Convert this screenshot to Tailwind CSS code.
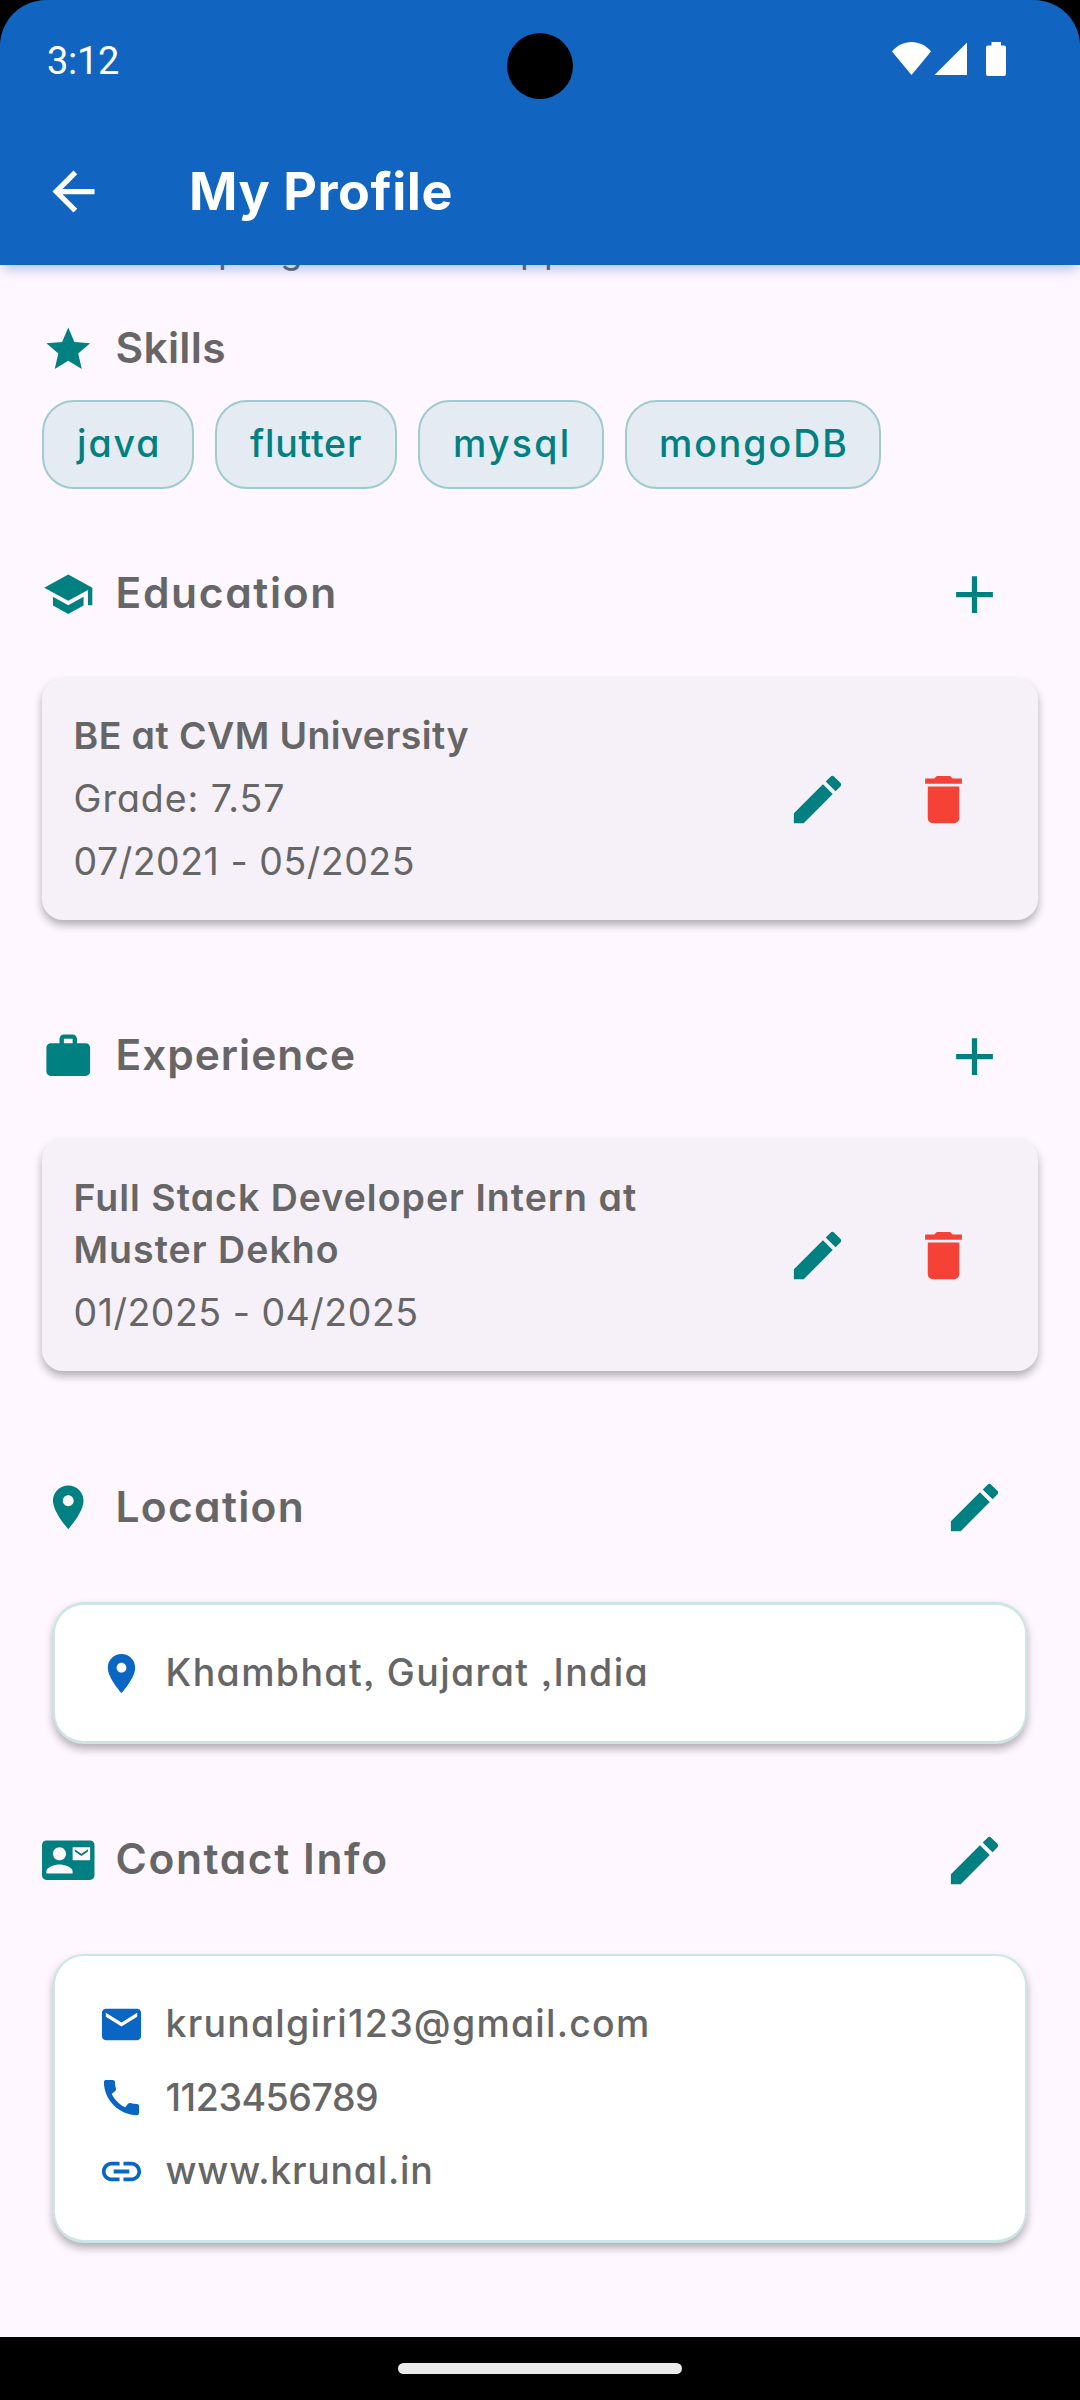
<!DOCTYPE html>
<html lang="en">
<head>
<meta charset="utf-8">
<title>My Profile</title>
<script src="https://cdn.jsdelivr.net/npm/@tailwindcss/browser@4"></script>
</head>
<body class="bg-black">
<!-- shared icon shapes -->
<svg class="hidden">
  <symbol id="edit" viewBox="0 0 24 24"><path d="M3 17.25V21h3.75L17.81 9.94l-3.75-3.75L3 17.25zM20.71 7.04c.39-.39.39-1.02 0-1.41l-2.34-2.34c-.39-.39-1.02-.39-1.41 0l-1.83 1.83 3.75 3.75 1.83-1.83z"/></symbol>
  <symbol id="delete" viewBox="0 0 24 24"><path d="M6 19c0 1.1.9 2 2 2h8c1.1 0 2-.9 2-2V7H6v12zM19 4h-3.5l-1-1h-5l-1 1H5v2h14V4z"/></symbol>
  <symbol id="add" viewBox="0 0 24 24"><path d="M19 13h-6v6h-2v-6H5v-2h6V5h2v6h6v2z"/></symbol>
  <symbol id="pin" viewBox="0 0 24 24"><path d="M12 2C8.13 2 5 5.13 5 9c0 5.25 7 13 7 13s7-7.75 7-13c0-3.87-3.13-7-7-7zm0 9.5c-1.38 0-2.5-1.12-2.5-2.5s1.12-2.5 2.5-2.5 2.5 1.12 2.5 2.5-1.12 2.5-2.5 2.5z"/></symbol>
</svg>
<div class="relative w-[1080px] h-[2400px] overflow-hidden flex flex-col font-[Inter,sans-serif] [font-feature-settings:'cv11','ss03'] text-[#666666] bg-[#fef7ff]">

  <header class="relative z-10 h-[265px] shrink-0 bg-[#1165c1] text-white rounded-t-[46px] shadow-[0_8px_12px_-3px_rgba(17,80,170,0.28)] flex flex-col">
    <div class="h-[118px] flex items-center pl-[47px] pr-[74px] font-[Roboto,sans-serif]">
      <span class="text-[38px] leading-none mt-[4px] tracking-[-0.3px]">3:12</span>
      <svg class="ml-auto w-[114px] h-[34px]" viewBox="892 42 114 34" fill="currentColor">
        <path d="M911.5 75L892 51.5C897 45.500 904 42 911.500 42S926 45.500 931 51.500z"/>
        <path d="M934.500 75L967 42.500V75z"/>
        <path d="M991.500 42h9.500v3.500h3a2 2 0 0 1 2 2V74a2 2 0 0 1-2 2h-16a2 2 0 0 1-2-2V47.500a2 2 0 0 1 2-2h3.500z"/>
      </svg>
    </div>
    <div class="h-[147px] flex items-center pl-[42px]">
      <svg class="w-[63px] h-[63px]" viewBox="0 0 24 24" fill="currentColor"><path d="M20 11H7.830l5.590-5.590L12 4l-8 8 8 8 1.410-1.410L7.830 13H20v-2z"/></svg>
      <h1 class="ml-[84px] text-[52px] leading-[60px] font-bold tracking-[0.570px]">My Profile</h1>
    </div>
    <div class="absolute left-[507px] top-[33px] w-[66px] h-[66px] rounded-full bg-black"></div>
  </header>
  <div class="absolute left-0 top-0 w-[1080px] h-[60px] bg-black"></div>

  <main class="flex-1 px-[42px] flex flex-col fill-[#008080]">
    <!-- last line of the section that is scrolled under the app bar -->
    <div class="h-0 flex items-end">
      <p class="text-[36px] leading-[52px] tracking-[1.9px] pl-[176px] -mb-[11px] flex"><span class="w-[278px]">program</span><span>app</span></p>
    </div>

    <div class="mt-[53px] h-[63px] flex items-center gap-[21px]">
      <svg class="w-[52.500px] h-[52.500px]" viewBox="0 0 24 24"><path d="M12 17.270L18.180 21l-1.640-7.030L22 9.240l-7.190-.61L12 2 9.190 8.630 2 9.240l5.460 4.730L5.820 21z"/></svg>
      <h2 class="text-[42.500px] leading-[62px] font-semibold tracking-[0.300px] pb-[3px]">Skills</h2>
    </div>
    <div class="mt-[19px] h-[89px] flex gap-[21px] text-[#008080] text-[37.500px] leading-[50px] font-medium">
      <div class="w-[152px] pl-[33px] pt-[17px] rounded-[32px] border-2 border-[#9fcbd0] bg-[#e4ebf2] tracking-[1.930px]">java</div>
      <div class="w-[182px] pl-[33px] pt-[17px] rounded-[32px] border-2 border-[#9fcbd0] bg-[#e4ebf2] tracking-[0.750px]">flutter</div>
      <div class="w-[186px] pl-[33px] pt-[17px] rounded-[32px] border-2 border-[#9fcbd0] bg-[#e4ebf2] tracking-[2.270px]">mysql</div>
      <div class="w-[256px] pl-[32px] pt-[17px] rounded-[32px] border-2 border-[#9fcbd0] bg-[#e4ebf2] tracking-[1.950px]">mongoDB</div>
    </div>

    <div class="mt-[42px] h-[126px] flex items-center gap-[21px]">
      <svg class="w-[52.500px] h-[52.500px]" viewBox="0 0 24 24"><path d="M5 13.180v4L12 21l7-3.820v-4L12 17l-7-3.820zM12 3L1 9l11 6 9-4.910V17h2V9L12 3z"/></svg>
      <h2 class="text-[42.500px] leading-[62px] font-semibold tracking-[1.650px] pb-[2px]">Education</h2>
      <svg class="ml-auto mr-[32px] w-[63px] h-[63px]"><use href="#add"/></svg>
    </div>
    <section class="mt-[21px] h-[242px] rounded-[21px] bg-[#f6f1f9] shadow-[0_5px_9px_rgba(0,0,0,0.3)] pl-[31.500px] pr-[63px] flex items-center text-[37.500px] leading-[52px]">
      <div class="flex flex-col gap-[11px]">
        <p class="font-semibold tracking-[0.410px]">BE at CVM University</p>
        <p class="tracking-[0.960px]">Grade: 7.57</p>
        <p class="tracking-[0.510px]">07/2021 - 05/2025</p>
      </div>
      <svg class="ml-auto w-[63px] h-[63px]"><use href="#edit"/></svg>
      <svg class="ml-[63px] w-[63px] h-[63px] fill-[#f44336]"><use href="#delete"/></svg>
    </section>

    <div class="mt-[73px] h-[126px] flex items-center gap-[21px]">
      <svg class="w-[52.500px] h-[52.500px]" viewBox="0 0 24 24"><path d="M20 6h-4V4c0-1.110-.89-2-2-2h-4c-1.110 0-2 .89-2 2v2H4c-1.110 0-1.990.89-1.990 2L2 19c0 1.110.89 2 2 2h16c1.110 0 2-.89 2-2V8c0-1.110-.89-2-2-2zm-6 0h-4V4h4v2z"/></svg>
      <h2 class="text-[42.500px] leading-[62px] font-semibold tracking-[0.950px] pb-[3px]">Experience</h2>
      <svg class="ml-auto mr-[32px] w-[63px] h-[63px]"><use href="#add"/></svg>
    </div>
    <section class="mt-[20px] h-[232px] rounded-[21px] bg-[#f6f1f9] shadow-[0_5px_9px_rgba(0,0,0,0.3)] pl-[31.500px] pr-[63px] flex items-center text-[37.500px] leading-[52px]">
      <div class="flex flex-col gap-[11px]">
        <p class="font-semibold tracking-[1.010px]">Full Stack Developer Intern at<br>Muster Dekho</p>
        <p class="tracking-[0.500px]">01/2025 - 04/2025</p>
      </div>
      <svg class="ml-auto w-[63px] h-[63px]"><use href="#edit"/></svg>
      <svg class="ml-[63px] w-[63px] h-[63px] fill-[#f44336]"><use href="#delete"/></svg>
    </section>

    <div class="mt-[73px] h-[126px] flex items-center gap-[21px]">
      <svg class="w-[52.500px] h-[52.500px]"><use href="#pin"/></svg>
      <h2 class="text-[42.500px] leading-[62px] font-semibold tracking-[1.300px] pb-[1px]">Location</h2>
      <svg class="ml-auto mr-[32px] w-[63px] h-[63px]"><use href="#edit"/></svg>
    </div>
    <section class="mt-[32px] mx-[11px] h-[142px] rounded-[31px] border-x-2 border-y-3 border-[#cce6e6] bg-white shadow-[0_5px_9px_rgba(0,0,0,0.3)] pl-[42.500px] flex items-center gap-[21px] text-[37.500px] leading-[52px] font-medium fill-[#0a66c2]">
      <svg class="w-[47px] h-[47px]"><use href="#pin"/></svg>
      <p class="tracking-[1.380px]">Khambhat, Gujarat ,India</p>
    </section>

    <div class="mt-[53px] h-[126px] flex items-center gap-[21px]">
      <svg class="w-[52.500px] h-[52.500px]" viewBox="0 0 24 24"><path d="M21 8V7l-3 2-3-2v1l3 2 3-2zm1-5H2C.9 3 0 3.900 0 5v14c0 1.100.9 2 2 2h20c1.100 0 1.990-.9 1.990-2L24 5c0-1.100-.9-2-2-2zM8 6c1.660 0 3 1.340 3 3s-1.340 3-3 3-3-1.340-3-3 1.340-3 3-3zm6 12H2v-1c0-2 4-3.100 6-3.100s6 1.100 6 3.100v1zm8-6h-8V6h8v6z"/></svg>
      <h2 class="text-[42.500px] leading-[62px] font-semibold tracking-[1.600px] pb-[2px]">Contact Info</h2>
      <svg class="ml-auto mr-[32px] w-[63px] h-[63px]"><use href="#edit"/></svg>
    </div>
    <section class="mt-[31px] mx-[11px] h-[289px] rounded-[31px] border-2 border-b-3 border-[#cce6e6] bg-white shadow-[0_5px_9px_rgba(0,0,0,0.3)] pl-[42.500px] pt-[42px] flex flex-col gap-[21.500px] text-[37.500px] leading-[52px] font-medium fill-[#0a66c2]">
      <div class="flex items-center gap-[21px]">
        <svg class="w-[47px] h-[47px]" viewBox="0 0 24 24"><path d="M20 4H4c-1.100 0-1.990.9-1.990 2L2 18c0 1.100.9 2 2 2h16c1.100 0 2-.9 2-2V6c0-1.100-.9-2-2-2zm0 4l-8 5-8-5V6l8 5 8-5v2z"/></svg>
        <p class="tracking-[1.220px]">krunalgiri123@gmail.com</p>
      </div>
      <div class="flex items-center gap-[21px]">
        <svg class="w-[47px] h-[47px]" viewBox="0 0 24 24"><path d="M20.010 15.380c-1.230 0-2.420-.2-3.530-.56-.35-.12-.74-.03-1.010.24l-1.570 1.970c-2.830-1.350-5.480-3.900-6.890-6.830l1.950-1.660c.27-.28.35-.67.24-1.020-.37-1.110-.56-2.300-.56-3.530 0-.54-.45-.99-.99-.99H4.190C3.650 3 3 3.240 3 3.990 3 13.280 10.730 21 20.010 21c.71 0 .99-.63.99-1.180v-3.450c0-.54-.45-.99-.99-.99z"/></svg>
        <p class="tracking-[-0.450px]">1123456789</p>
      </div>
      <div class="flex items-center gap-[21px]">
        <svg class="w-[47px] h-[47px]" viewBox="0 0 24 24"><path d="M3.900 12c0-1.710 1.390-3.100 3.100-3.100h4V7H7c-2.760 0-5 2.240-5 5s2.240 5 5 5h4v-1.900H7c-1.710 0-3.100-1.390-3.100-3.100zM8 13h8v-2H8v2zm9-6h-4v1.900h4c1.710 0 3.100 1.390 3.100 3.100s-1.390 3.100-3.100 3.100h-4V17h4c2.760 0 5-2.240 5-5s-2.240-5-5-5z"/></svg>
        <p class="tracking-[0.730px]">www.krunal.in</p>
      </div>
    </section>
  </main>

  <footer class="h-[63px] shrink-0 bg-black flex justify-center pt-[26px]">
    <div class="w-[284px] h-[11px] rounded-full bg-[#ebebeb]"></div>
  </footer>
</div>
</body>
</html>
